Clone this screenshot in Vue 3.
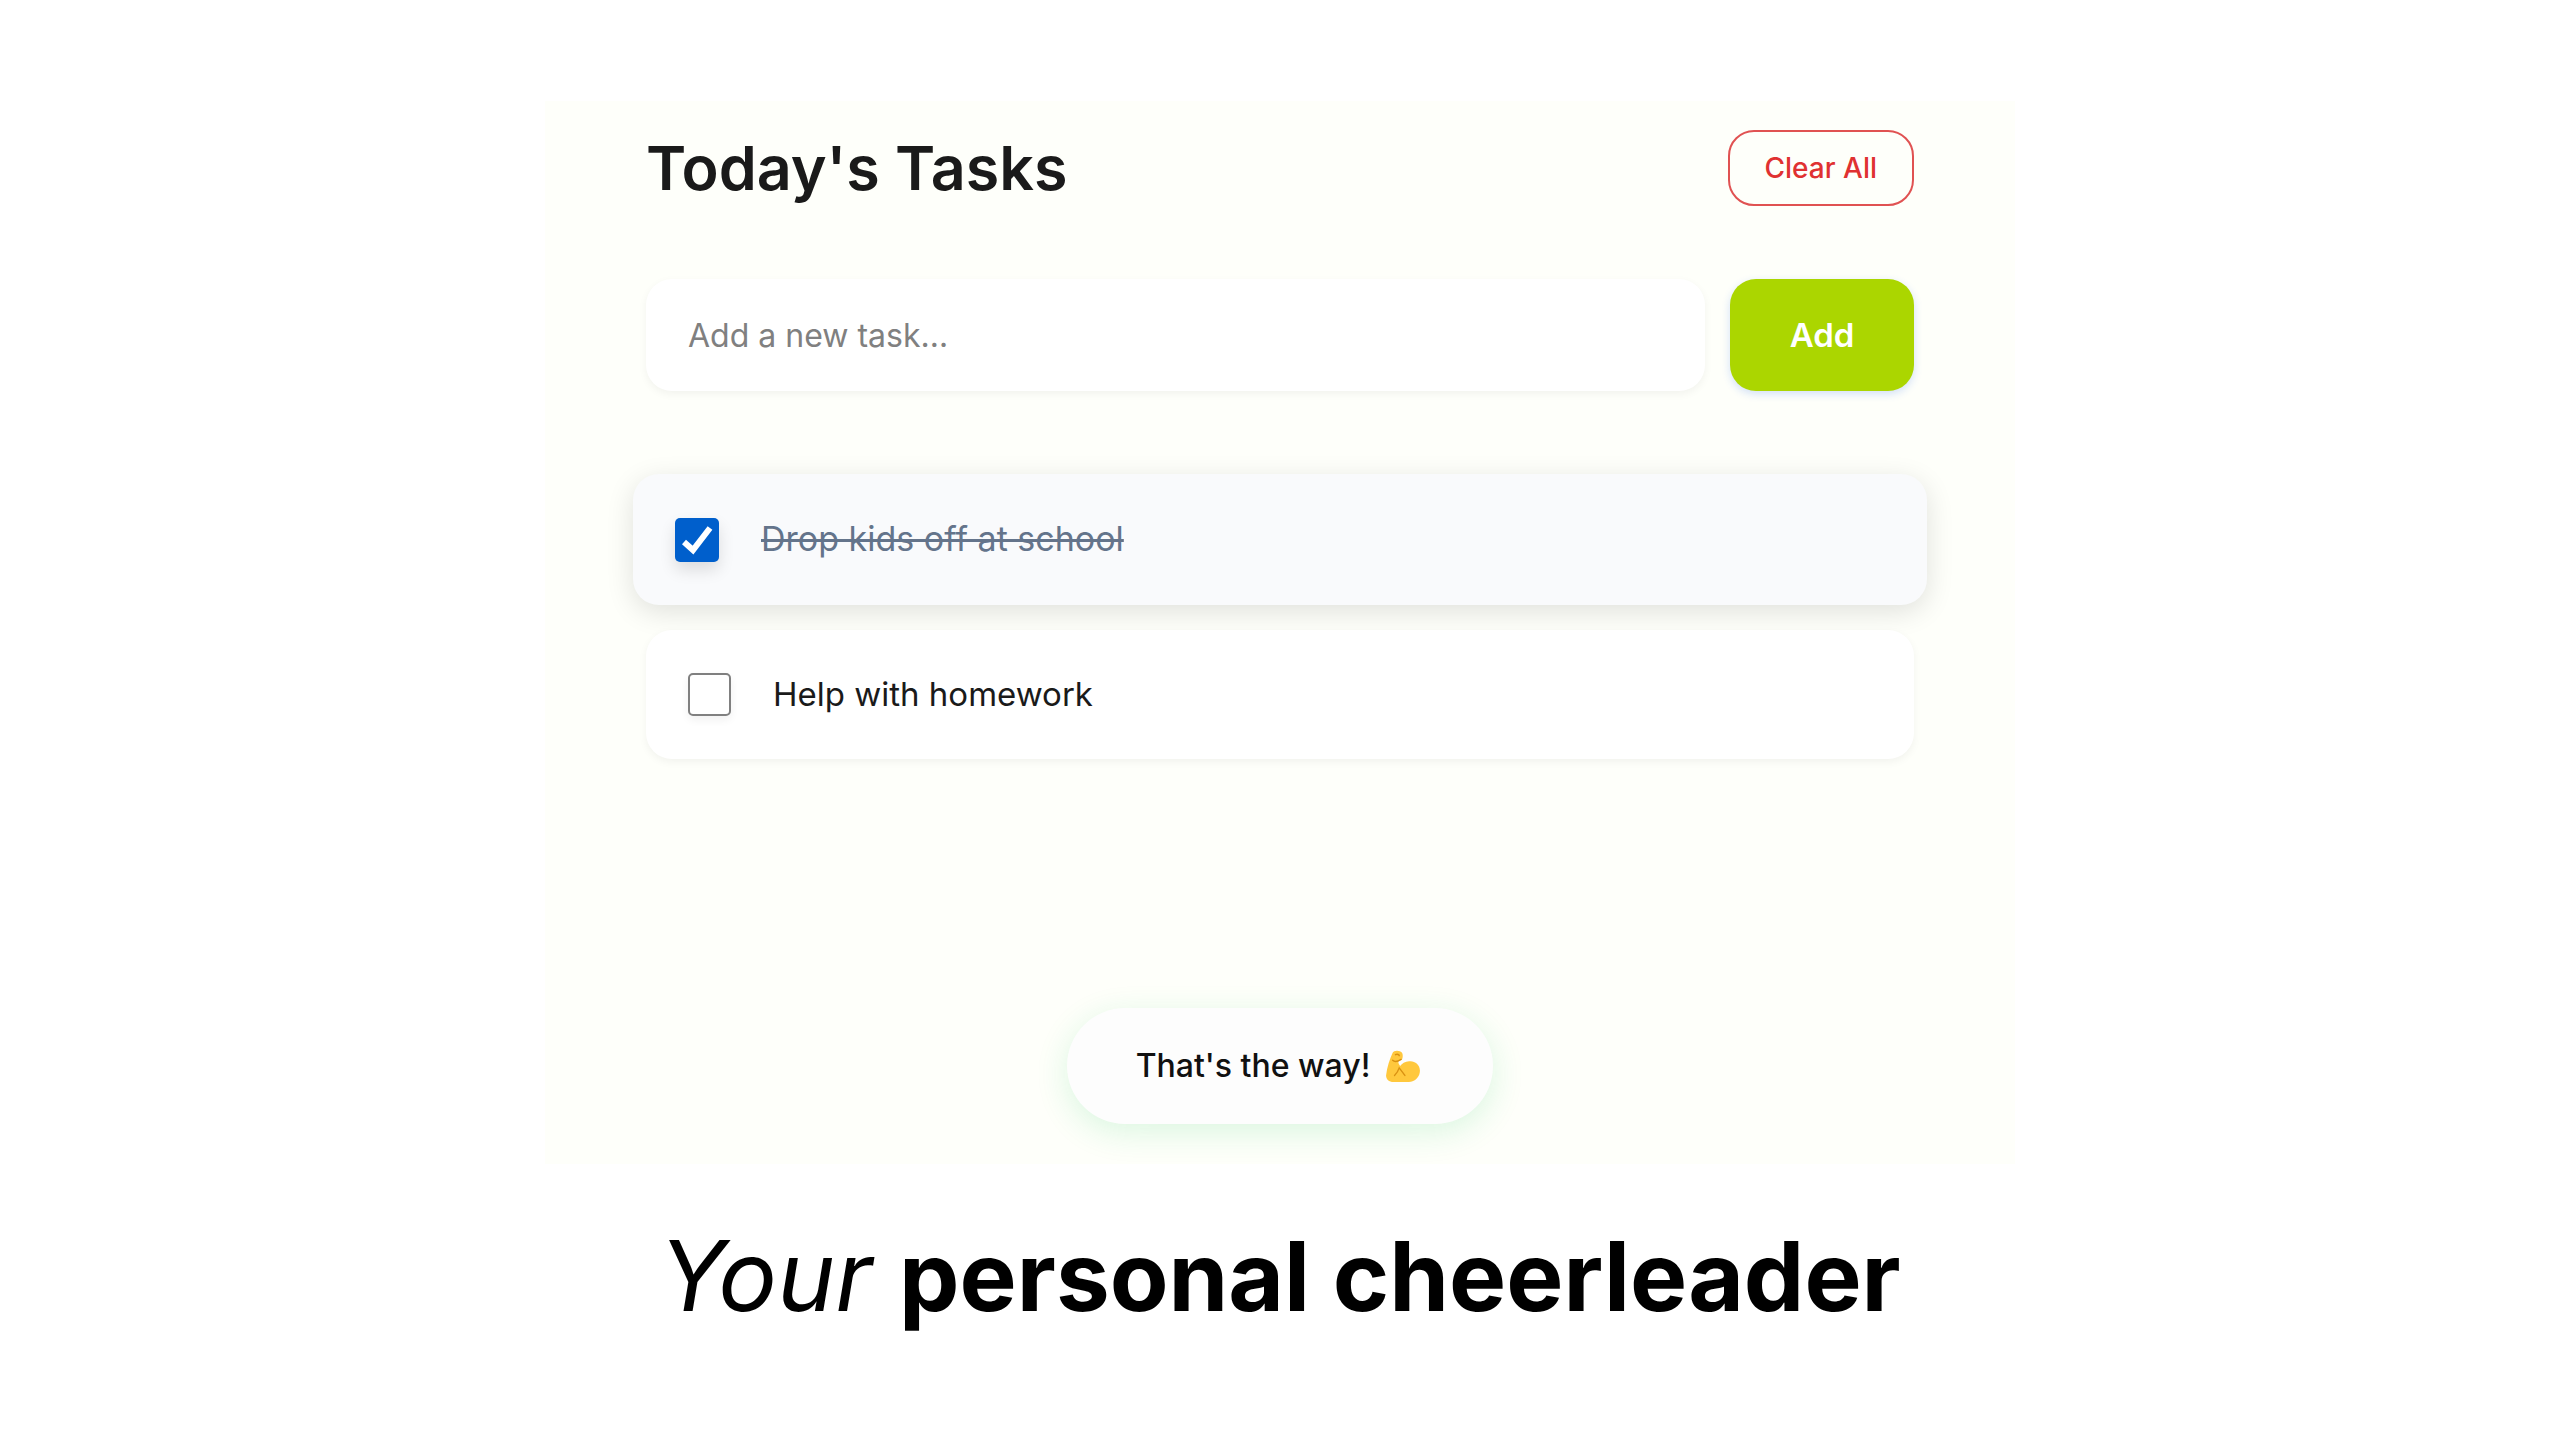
<script setup>
import { ref } from 'vue'

const draft = ref('')
const tasks = ref([
  { id: 1, text: 'Drop kids off at school', done: true },
  { id: 2, text: 'Help with homework', done: false },
])

function addTask() {
  const text = draft.value.trim()
  if (!text) return
  tasks.value.push({ id: Date.now(), text, done: false })
  draft.value = ''
}

function clearAll() {
  tasks.value = []
}
</script>

<template>
  <main class="page">
    <section class="panel">
      <header class="head">
        <h1 class="title">Today's Tasks</h1>
        <button class="clear" type="button" @click="clearAll">Clear All</button>
      </header>

      <form class="entry" @submit.prevent="addTask">
        <input v-model="draft" class="field" type="text" placeholder="Add a new task…" aria-label="Add a new task" />
        <button class="add" type="submit">Add</button>
      </form>

      <ul class="tasks">
        <li v-for="task in tasks" :key="task.id" class="task" :class="{ done: task.done }">
          <input :id="'task-' + task.id" v-model="task.done" class="tick" type="checkbox" />
          <label class="label" :for="'task-' + task.id">{{ task.text }}</label>
        </li>
      </ul>

      <p class="toast" role="status">
        <span>That's the way!</span>
        <svg class="arm" viewBox="0 0 36 34" aria-hidden="true">
          <path d="M7 3C8 0 15 0 17 3c1 2 1 5 0 7l-4 2c0 2 1 4 2 5 3-4 7-5 11-5 5 0 10 4 10 10s-5 12-12 12H8c-5 0-8-3-8-7C1 18 4 10 7 3z" fill="#ffc83d" />
          <path d="M10 5c2-1 4 0 4 1M7 11c2 2 6 1 9-1M9 27c2-2 4-5 5-8l6 8" fill="none" stroke="#d99112" stroke-width="1.5" stroke-linecap="round" />
        </svg>
      </p>
    </section>

    <h2 class="caption"><em>Your</em> <strong>personal cheerleader</strong></h2>
  </main>
</template>

<style>
body {
  margin: 0;
  background: #fff;
}
</style>

<style scoped>
.page {
  box-sizing: border-box;
  min-height: 100vh;
  padding: 101px 24px 96px;
  display: flex;
  flex-direction: column;
  align-items: center;
  font-family: Inter, "Liberation Sans", sans-serif;
  color: #1a1a1a;
}
.panel {
  box-sizing: border-box;
  width: 100%;
  max-width: 1470px;
  padding: 29px 101px 40px;
  display: flex;
  flex-direction: column;
  background: #fefffa;
}
.head {
  display: flex;
  align-items: center;
  justify-content: space-between;
}
.title {
  margin: 0;
  font-size: 61px;
  line-height: 76px;
  font-weight: 600;
}
.clear {
  height: 76px;
  padding: 0 35px;
  border: 2px solid #e05252;
  border-radius: 26px;
  background: transparent;
  color: #e03131;
  font: 500 28px/32px Inter, sans-serif;
}
.entry {
  display: flex;
  gap: 25px;
  margin-top: 73px;
}
.field {
  flex: 1;
  min-width: 0;
  height: 112px;
  box-sizing: border-box;
  padding: 0 42px;
  border: 0;
  border-radius: 26px;
  background: #fff;
  box-shadow: 0 3px 8px rgba(0, 0, 0, 0.05);
  color: inherit;
  font: 400 32px/40px Inter, sans-serif;
}
.field::placeholder {
  color: #808080;
  opacity: 1;
}
.add {
  width: 184px;
  border: 0;
  border-radius: 26px;
  background: #abd600;
  box-shadow: 0 3px 8px rgba(37, 99, 235, 0.2);
  color: #fff;
  font: 600 33px/40px Inter, sans-serif;
}
.tasks {
  margin: 83px 0 0;
  padding: 0;
  list-style: none;
  display: flex;
  flex-direction: column;
  gap: 25px;
}
.task {
  display: flex;
  align-items: center;
  gap: 42px;
  height: 129px;
  padding: 0 42px;
  border-radius: 26px;
  background: #fff;
  box-shadow: 0 3px 8px rgba(0, 0, 0, 0.05);
  font-size: 33px;
  line-height: 40px;
}
.task.done {
  height: 131px;
  margin: 0 -13px;
  background: #f9fafc;
  box-shadow: 0 7px 28px rgba(0, 0, 0, 0.12);
  font-size: 34px;
}
.label {
  padding-bottom: 2px;
}
.done .label {
  color: #64748b;
  text-decoration: line-through;
  text-decoration-thickness: 3px;
}
.tick {
  appearance: none;
  flex: none;
  box-sizing: border-box;
  width: 43px;
  height: 43px;
  margin: 0;
  border: 2px solid #808080;
  border-radius: 5px;
  background: #fff;
  box-shadow: 0 4px 8px rgba(0, 0, 0, 0.06);
}
.tick:checked {
  width: 44px;
  height: 44px;
  border: 0;
  background: #005fcc url("data:image/svg+xml,%3Csvg xmlns='http://www.w3.org/2000/svg' viewBox='0 0 44 44'%3E%3Cpath d='M9 24l9 8L35 10' fill='none' stroke='white' stroke-width='6'/%3E%3C/svg%3E") center / 100%;
  box-shadow: 0 8px 16px rgba(0, 0, 0, 0.12);
}
.toast {
  box-sizing: border-box;
  align-self: center;
  height: 116px;
  margin: 249px 0 0;
  padding: 0 73px 0 69px;
  display: flex;
  align-items: center;
  gap: 16px;
  border-radius: 58px;
  background: #fdfdfd;
  box-shadow: 0 8px 32px rgba(34, 197, 94, 0.16);
  color: #111;
  font-size: 32px;
  line-height: 40px;
  font-weight: 500;
}
.arm {
  width: 34px;
  height: 32px;
}
.caption {
  margin: 52px 0 0;
  color: #000;
  font-size: 96px;
  line-height: 120px;
  font-weight: 400;
}
.caption em {
  font-size: 98px;
}
.caption strong {
  font-weight: 700;
}
</style>
